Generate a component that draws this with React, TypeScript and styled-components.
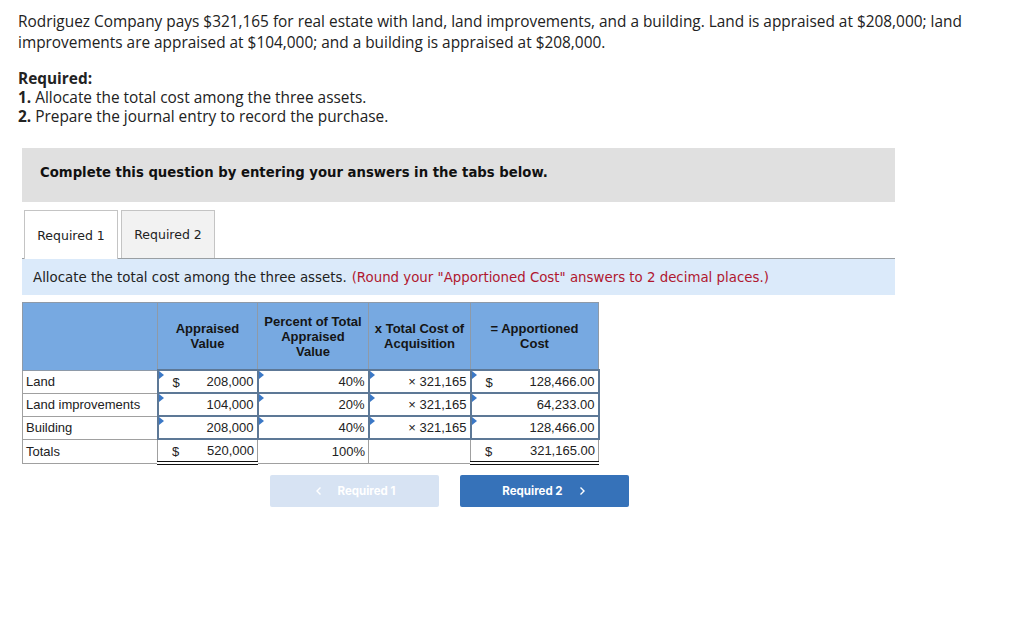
import styled, { createGlobalStyle } from "styled-components";

const GlobalStyle = createGlobalStyle`
  body {
    margin: 0;
    background: #ffffff;
    color: #1f1f1f;
  }
`;

const Page = styled.div`
  width: 1024px;
  height: 620px;
  padding: 11px 0 0 18px;
  box-sizing: border-box;
  overflow: hidden;
`;

const Prompt = styled.div`
  font-family: "Open Sans", "Liberation Sans", sans-serif;
  font-size: 15.4px;
  line-height: 21px;
  width: 990px;
  color: #222;
`;

const Required = styled.div`
  font-family: "Open Sans", "Liberation Sans", sans-serif;
  font-size: 15.4px;
  line-height: 19px;
  margin-top: 16px;
  color: #222;
  b {
    font-weight: 700;
  }
`;

const Panel = styled.div`
  width: 873px;
  margin: 22px 0 0 4px;
  font-family: "DejaVu Sans", Verdana, sans-serif;
`;

const Banner = styled.div`
  height: 54px;
  box-sizing: border-box;
  padding: 0 0 6px 18px;
  background: #e0e0e0;
  display: flex;
  align-items: center;
  font-size: 13.25px;
  font-weight: 700;
  color: #111;
`;

const Tabs = styled.div`
  display: flex;
  gap: 3px;
  margin-top: 8px;
  padding-left: 2px;
  border-bottom: 1px solid #9a9fa3;
`;

const Tab = styled.div<{ $active?: boolean }>`
  width: 94px;
  box-sizing: border-box;
  border: 1px solid #c4c4c4;
  border-bottom: none;
  background: ${(p) => (p.$active ? "#ffffff" : "#f2f2f2")};
  display: flex;
  align-items: center;
  justify-content: center;
  font-size: 12.5px;
  color: #222;
  margin-bottom: ${(p) => (p.$active ? "-1px" : "0")};
  height: ${(p) => (p.$active ? "49px" : "48px")};
`;

const Instruction = styled.div`
  height: 36px;
  background: #dbeafa;
  display: flex;
  align-items: center;
  padding-left: 11px;
  font-size: 13.35px;
  color: #222;
  span {
    color: #b0172f;
    margin-left: 5px;
  }
`;

const Table = styled.table`
  margin-top: 7px;
  border-collapse: collapse;
  table-layout: fixed;
  font-family: "Liberation Sans", Arial, sans-serif;
  font-size: 13px;
  color: #222;
`;

const Head = styled.th`
  background: #77a9e1;
  border: 1px solid #8e9aa8;
  height: 66px;
  padding: 0 2px;
  font-weight: 700;
  font-size: 13px;
  line-height: 15px;
  color: #151515;
  text-align: center;
  vertical-align: middle;
`;

const Label = styled.td`
  border: 1px solid #a0a0a0;
  border-right: none;
  height: 21px;
  padding: 0 3px;
  white-space: nowrap;
`;

const Cell = styled.td<{ $input?: boolean; $double?: boolean }>`
  position: relative;
  height: 21px;
  padding: 0 3px;
  text-align: right;
  border: ${(p) => (p.$input ? "2px solid #5d7896" : "1px solid #a0a0a0")};
  border-bottom: ${(p) => (p.$double ? "4px double #111" : p.$input ? "2px solid #5d7896" : "1px solid #a0a0a0")};
  white-space: nowrap;
`;

const Marker = styled.span`
  position: absolute;
  left: 0;
  top: 0;
  width: 0;
  height: 0;
  border-top: 4px solid transparent;
  border-bottom: 4px solid transparent;
  border-left: 5px solid #3b78c6;
`;

const Dollar = styled.span`
  position: absolute;
  left: 14px;
  top: 50%;
  transform: translateY(-50%);
`;

const Buttons = styled.div`
  display: flex;
  gap: 21px;
  margin: 10px 0 0 248px;
`;

const NavButton = styled.div<{ $disabled?: boolean }>`
  width: 169px;
  height: 32px;
  border-radius: 2px;
  background: ${(p) => (p.$disabled ? "#d7e3f3" : "#3672b9")};
  color: #ffffff;
  font-family: Inter, "Liberation Sans", sans-serif;
  font-size: 11.5px;
  font-weight: 700;
  display: flex;
  align-items: center;
  justify-content: center;
  gap: 14px;
  svg {
    width: 10px;
    height: 10px;
  }
`;

const Chevron = ({ dir }: { dir: "left" | "right" }) => (
  <svg viewBox="0 0 10 10" fill="none" stroke="#fff" strokeWidth="1.4">
    {dir === "left" ? <path d="M6.5 1.5 3 5l3.5 3.5" /> : <path d="M3.5 1.5 7 5 3.5 8.5" />}
  </svg>
);

type Row = { label: string; value: string; pct: string; apportioned: string; dollar?: boolean };

const rows: Row[] = [
  { label: "Land", value: "208,000", pct: "40%", apportioned: "128,466.00", dollar: true },
  { label: "Land improvements", value: "104,000", pct: "20%", apportioned: "64,233.00" },
  { label: "Building", value: "208,000", pct: "40%", apportioned: "128,466.00" },
];

function App() {
  return (
    <Page>
      <GlobalStyle />
      <Prompt>
        Rodriguez Company pays $321,165 for real estate with land, land improvements, and a building. Land is appraised at
        $208,000; land improvements are appraised at $104,000; and a building is appraised at $208,000.
      </Prompt>
      <Required>
        <b>Required:</b>
        <div>
          <b>1.</b> Allocate the total cost among the three assets.
        </div>
        <div>
          <b>2.</b> Prepare the journal entry to record the purchase.
        </div>
      </Required>
      <Panel>
        <Banner>Complete this question by entering your answers in the tabs below.</Banner>
        <Tabs>
          <Tab $active>Required 1</Tab>
          <Tab>Required 2</Tab>
        </Tabs>
        <Instruction>
          Allocate the total cost among the three assets.
          <span>(Round your "Apportioned Cost" answers to 2 decimal places.)</span>
        </Instruction>
        <Table>
          <colgroup>
            <col style={{ width: 135 }} />
            <col style={{ width: 100 }} />
            <col style={{ width: 111 }} />
            <col style={{ width: 102 }} />
            <col style={{ width: 128 }} />
          </colgroup>
          <thead>
            <tr>
              <Head />
              <Head>
                Appraised
                <br />
                Value
              </Head>
              <Head>
                Percent of Total
                <br />
                Appraised
                <br />
                Value
              </Head>
              <Head>
                x Total Cost of
                <br />
                Acquisition
              </Head>
              <Head>
                = Apportioned
                <br />
                Cost
              </Head>
            </tr>
          </thead>
          <tbody>
            {rows.map((r) => (
              <tr key={r.label}>
                <Label>{r.label}</Label>
                <Cell $input>
                  <Marker />
                  {r.dollar && <Dollar>$</Dollar>}
                  {r.value}
                </Cell>
                <Cell $input>
                  <Marker />
                  {r.pct}
                </Cell>
                <Cell $input>
                  <Marker />× 321,165
                </Cell>
                <Cell $input>
                  <Marker />
                  {r.dollar && <Dollar>$</Dollar>}
                  {r.apportioned}
                </Cell>
              </tr>
            ))}
            <tr>
              <Label>Totals</Label>
              <Cell $double>
                <Dollar>$</Dollar>
                520,000
              </Cell>
              <Cell>100%</Cell>
              <Cell />
              <Cell $double>
                <Dollar>$</Dollar>
                321,165.00
              </Cell>
            </tr>
          </tbody>
        </Table>
        <Buttons>
          <NavButton $disabled>
            <Chevron dir="left" />
            Required 1
          </NavButton>
          <NavButton>
            Required 2
            <Chevron dir="right" />
          </NavButton>
        </Buttons>
      </Panel>
    </Page>
  );
}

export default App;
